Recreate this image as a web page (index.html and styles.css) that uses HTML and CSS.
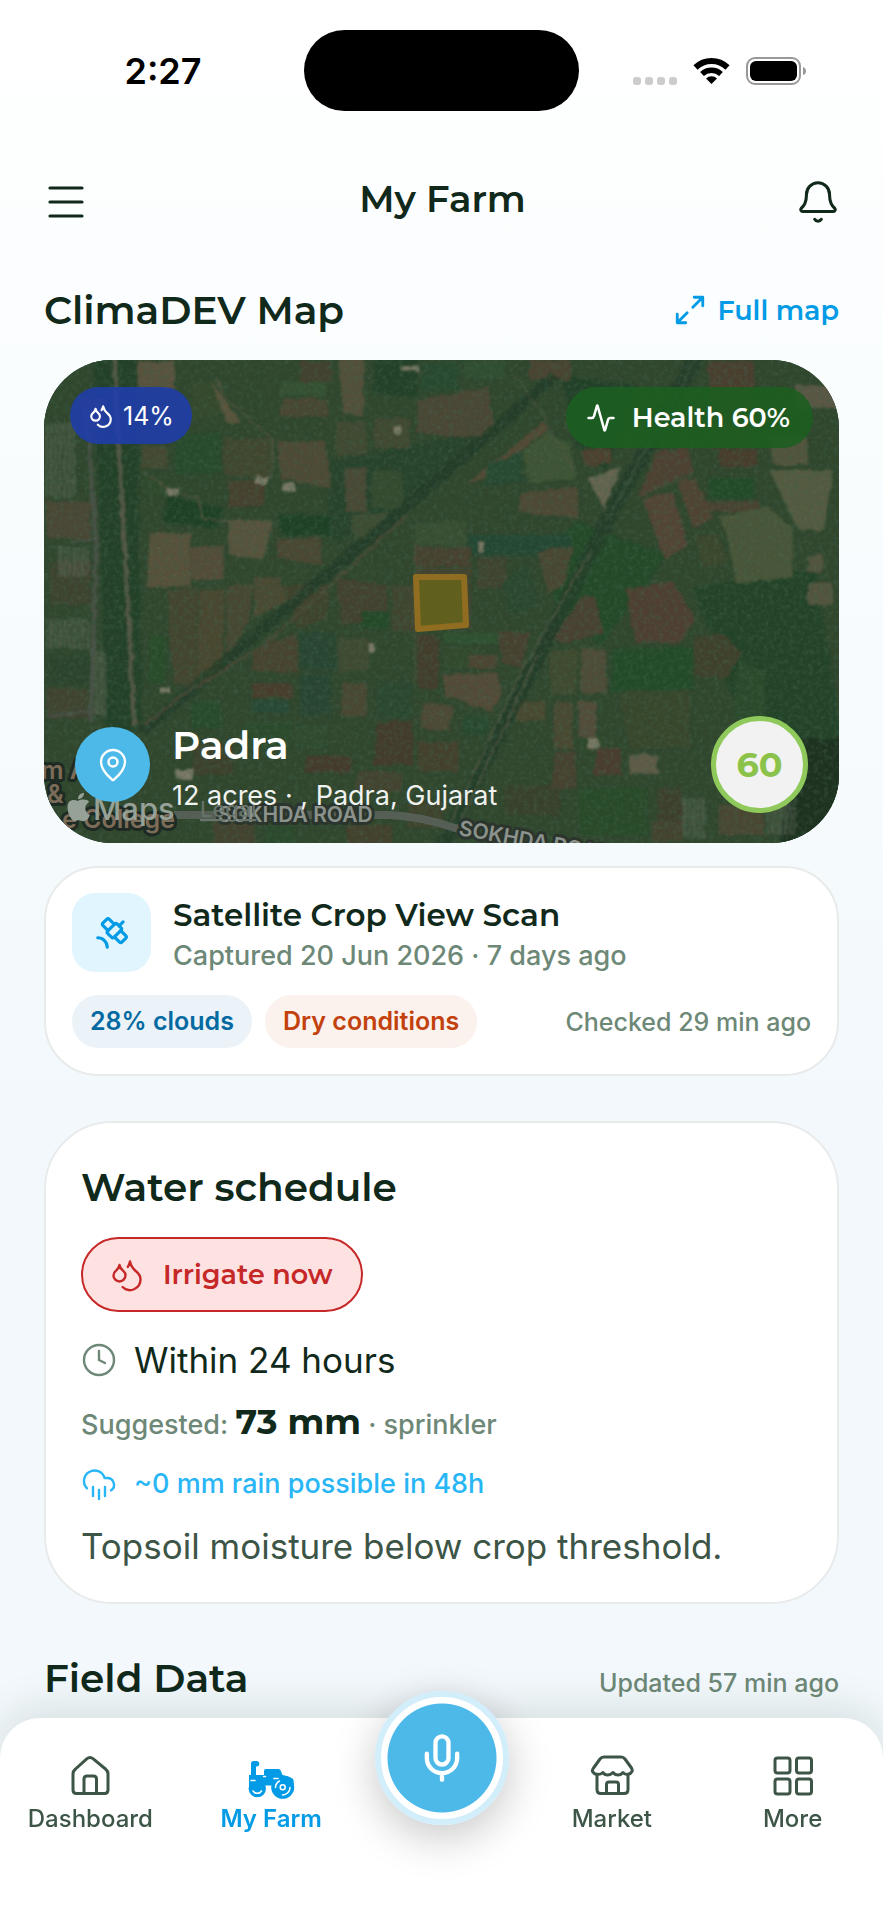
FILE: index.html
```html
<!DOCTYPE html>
<html lang="en">
<head>
<meta charset="utf-8">
<meta name="viewport" content="width=device-width, initial-scale=1">
<title>My Farm</title>
<link rel="stylesheet" href="styles.css">
</head>
<body>
<div class="statusbar">
  <span class="time">2:27</span>
  <span class="island"></span>
  <div class="system">
    <span class="dots"><i></i><i></i><i></i><i></i></span>
    <svg class="wifi" viewBox="0 0 37 27" aria-hidden="true"><path d="M2.500 10.500a23 23 0 0 1 32 0" fill="none" stroke="#000" stroke-width="6"/><path d="M9 17a14 14 0 0 1 19 0" fill="none" stroke="#000" stroke-width="5.500"/><path d="M18.500 27l-5.500-5.500a8 8 0 0 1 11 0z"/></svg>
    <svg class="battery" viewBox="0 0 60 28" aria-hidden="true"><rect x="1" y="1" width="53" height="26" rx="8" fill="#fff" stroke="#999" stroke-width="2"/><rect x="4" y="4" width="47" height="20" rx="6"/><path d="M57 10q3 1 3 4t-3 4z" fill="#999"/></svg>
  </div>
</div>

<header class="topbar">
  <button class="icon-btn" aria-label="Menu"><svg class="icon i48" viewBox="0 0 24 24"><path d="M4 5h16M4 12h16M4 19h16"/></svg></button>
  <h1>My Farm</h1>
  <button class="icon-btn" aria-label="Notifications"><svg class="icon i46" viewBox="0 0 24 24"><path d="M10.268 21a2 2 0 0 0 3.464 0"/><path d="M3.262 15.326A1 1 0 0 0 4 17h16a1 1 0 0 0 .74-1.673C19.41 13.956 18 12.499 18 8A6 6 0 0 0 6 8c0 4.499-1.411 5.956-2.738 7.326"/></svg></button>
</header>

<main>
  <div class="section-head">
    <h2>ClimaDEV Map</h2>
    <a class="full-map" href="#map"><svg class="icon i34 bold" viewBox="0 0 24 24"><path d="M15 3h6v6M21 3l-7 7M9 21H3v-6M3 21l7-7"/></svg>Full map</a>
  </div>

  <section class="map" id="map">
    <svg class="terrain" viewBox="0 0 795 483" preserveAspectRatio="xMidYMid slice" aria-hidden="true">
      <defs>
        <filter id="rough" x="0" y="0" width="100%" height="100%">
          <feTurbulence type="fractalNoise" baseFrequency=".12" numOctaves="3" seed="4" result="n"/>
          <feDisplacementMap in="SourceGraphic" in2="n" scale="6" xChannelSelector="R" yChannelSelector="G"/>
          <feGaussianBlur stdDeviation=".9"/>
        </filter>
        <filter id="grain" x="0" y="0" width="100%" height="100%">
          <feTurbulence type="fractalNoise" baseFrequency=".2" numOctaves="4" seed="9"/>
          <feColorMatrix values="0 0 0 0 .05  0 0 0 0 .12  0 0 0 0 .07  2.600 0 0 0 -1.150"/>
        </filter>
        <filter id="speck" x="0" y="0" width="100%" height="100%">
          <feTurbulence type="fractalNoise" baseFrequency=".3" numOctaves="2" seed="21"/>
          <feColorMatrix values="0 0 0 0 .45  0 0 0 0 .48  0 0 0 0 .36  0 2.400 0 0 -1.300"/>
        </filter>
        <pattern id="houses" width="9" height="8" patternUnits="userSpaceOnUse"><rect x="1" y="1" width="5" height="4" fill="#7b8173"/><rect x="6" y="5" width="2" height="2" fill="#5c6759"/></pattern>
      </defs>
      <rect width="795" height="483" fill="#2b462c"/>
      <g filter="url(#rough)">
      <g transform="translate(-4 -5) scale(.5102 .3333)">
        <g fill="#1f4027">
          <path d="M105 0h40l45 1130h-60z"/><path d="M150 0h40l10 1100h-25z"/>
          <path d="M1050 500l180 100-60 120-70 150-80-60-30-200z" fill="#1d4926"/>
          <path d="M1280 700l240-60 50 500-100 50-110-160z" fill="#1f4226"/>
          <path d="M1480 1150h90v320h-120z" fill="#142e1d"/>
          <path d="M1020 60l150 30-60 260-60-80z"/><path d="M560 320l300-90-150 240-140 100z" fill="#24432b"/>
          <path d="M250 420l110 40-10 60-110-20z" fill="#193f24"/><path d="M470 480h100v60h-100z" fill="#193f24"/>
          <path d="M840 540h200v60H840z" fill="#1f4630"/><path d="M660 0h80v130l-90-20z"/>
        </g>
        <g fill="#43432e">
          <path d="M735 640h110v180H735z"/><path d="M475 690h90v100l-60 30z" fill="#3d422c"/><path d="M690 690h45v140h-45z" fill="#3d452e"/>
          <path d="M300 1170h80v90h-80z" fill="#3b3f2b"/><path d="M400 1100h90v80h-90z" fill="#264c2c"/><path d="M500 1110h60v70h-60z" fill="#2a4c2e"/>
          <path d="M620 1250h90v60h-90z"/><path d="M340 1400h80v70h-80z"/><path d="M440 1410h60v60h-60z" fill="#264829"/><path d="M600 1410h90v60h-90z" fill="#43402c"/>
          <path d="M830 1080h50v60h-50z" fill="#24492f"/><path d="M930 1040h60v60h-60z" fill="#4a482f"/><path d="M720 1340h70v80h-70z" fill="#3c422b"/>
          <path d="M1210 1300h50v140h-50z" fill="#3a3d2a"/><path d="M1200 1400h60v60h-60z"/><path d="M1060 1140h50v50h-50z" fill="#2b482b"/>
          <path d="M1310 370h90v60h-90z" fill="#1f4c28"/><path d="M1300 440h110v30h-110z" fill="#4b4230"/><path d="M510 20h60v60h-60z" fill="#43412d"/><path d="M960 15h80v60h-80z" fill="#4b4431"/>
          <path d="M20 620h80v130H20z" fill="#3b432e"/><path d="M20 900h80v90H20z" fill="#26432b"/><path d="M200 360h50v60h-50z" fill="#2b4a2c"/>
          <path d="M190 20h75v80h-70z" fill="#5b5540"/><path d="M300 85l45-10 10 100-60 20z" fill="#304a2a"/><path d="M335 75l60 130-30-5z" fill="#5d563e"/>
          <path d="M585 0h50v180h-40z" fill="#54513a"/><path d="M475 130h90v55h-95z" fill="#4a4632"/><path d="M475 80h85v40h-90z" fill="#335233"/>
          <path d="M750 25h70v80h-75z" fill="#214a2f"/><path d="M740 135l140-40 10 140-60 15-90-20z" fill="#4b4734"/><path d="M830 20h80v50h-80z" fill="#2c5032"/>
          <path d="M465 260h95l10 140-100-30z" fill="#4f4b34"/><path d="M265 235h90v120h-90z" fill="#234b2a"/><path d="M360 250h90v120l-90-10z" fill="#41472f"/><path d="M370 375h70v80h-70z" fill="#463f2e"/>
          <path d="M80 130h45v90H90z" fill="#4f4a37"/><path d="M200 270h50v70h-50z" fill="#444a30"/><path d="M595 340h45v130h-40z" fill="#4a4934"/><path d="M650 350h60v110h-60z" fill="#304b2f"/><path d="M580 200h60v100h-60zM655 190h70v90h-70z" fill="#404831"/>
          <path d="M370 495h85l-10 80-10 40-65-20z" fill="#5a543d"/><path d="M215 535h80v160h-85z" fill="#5a533b"/><path d="M295 575h65v100h-65z" fill="#554e38"/><path d="M465 555l85-10 5 85-90-20z" fill="#4b4633"/><path d="M610 480l80-10-60 90-20-30z" fill="#3b4d33"/>
          <path d="M735 500h100v70H735z" fill="#344f33"/><path d="M735 575h110v60H735z" fill="#473f2f"/><path d="M580 670l100 20v90l-90 30z" fill="#43412e"/><path d="M630 770h55v50h-55z" fill="#1f4828"/>
          <path d="M250 705h60l-5 290-40-10-10-120z" fill="#43442e"/><path d="M312 705h50l-5 240-50 60z" fill="#4a472f"/><path d="M366 690h52l-10 110-44 120z" fill="#464630"/><path d="M420 668h50l15 70-65 50z" fill="#4c4a31"/>
          <path d="M835 390l150-190 15 20-130 150z" fill="#574835"/><path d="M945 290l50-60 45 40 10 100-90 15z" fill="#3c5635"/><path d="M945 415l110-20v95l-120-20z" fill="#504834"/><path d="M880 330l60-40 10 90-80 10z" fill="#224830"/>
          <path d="M1060 285h60v40l-50 10z" fill="#4f3f2f"/><path d="M1075 370l65-35-35 130z" fill="#6b6a55"/><path d="M1210 290l60-10 10 70-110 80z" fill="#4f4030"/><path d="M1180 430l60-20 30 160-45 45z" fill="#544535"/><path d="M1250 380l35-10 35 120-40 30z" fill="#514333"/>
          <path d="M1310 20h90v260h-85z" fill="#4b3c2d"/><path d="M1425 240h80v90h-70z" fill="#55563d"/><path d="M1480 90h85v70h-85z" fill="#5d5a46"/><path d="M1330 285h75v50h-75z" fill="#483a2c"/>
          <path d="M1430 345h125l-20 180h-50z" fill="#575e42"/><path d="M1330 485l95-30 50 60v150l-110 20-20-150z" fill="#4a5838"/><path d="M1285 550l40-20 25 90-50 20z" fill="#39462c"/>
          <path d="M1150 705l90-30 45 120-35 70-85-5z" fill="#4f3e30"/><path d="M1060 725l25 0 20 110-70 30-30-10z" fill="#494030"/><path d="M1000 890l55-10-5 140-50-5z" fill="#3c4b2e"/><path d="M1060 880l50 5v130h-50z" fill="#504e37"/>
          <path d="M1120 880h160v120l-160 10z" fill="#1e4c27"/><path d="M1280 850l60-15 35 60-30 75-60-5z" fill="#3c4129"/><path d="M1135 1010h140v170h-120z" fill="#34462c"/><path d="M1370 920l50 30v140h-60z" fill="#264c2a"/>
          <path d="M790 835h110v30H790z" fill="#2b522d"/><path d="M790 880h60v60h-60z" fill="#2d4a2c"/><path d="M900 830l60 0-15 110-40-20z" fill="#463f2e"/><path d="M840 900h55v40h-55z" fill="#4e4431"/><path d="M740 840h40v160h-40z" fill="#433a2b"/>
          <path d="M790 960l105-10 10 60-20 60-90-50z" fill="#544b37"/><path d="M510 835h70v110h-70zM510 960h60v120h-60z" fill="#204531"/><path d="M420 880l85-45v120l-90-10z" fill="#46422f"/><path d="M215 840h30v140h-30z" fill="#204e26"/><path d="M415 985h80v45h-80z" fill="#493a2b"/><path d="M415 1035h75v35h-75z" fill="#224834"/><path d="M590 985h50v100h-50z" fill="#4a4631"/><path d="M585 850h60v100h-60z" fill="#3c4b31"/><path d="M660 980h70v110h-70z" fill="#26462f"/>
          <path d="M750 1040l60 20-10 70-55-10z" fill="#504935"/><path d="M660 1100h70v130h-75z" fill="#42392a"/><path d="M300 1040h55v80h-55z" fill="#204c29"/><path d="M520 1200h90v50h-90z" fill="#443729"/><path d="M740 1160h80v90h-80z" fill="#42402c"/><path d="M1010 1040h35v140h-40z" fill="#494832"/><path d="M1055 1040h35v110h-35z" fill="#544e3b"/><path d="M1090 1180h50v80h-55z" fill="#4b3a2d"/>
          <path d="M1155 1200h55v55h-55z" fill="#635f4b"/><path d="M1055 1300h135v140h-130z" fill="#214b28"/><path d="M910 1290h110v90H910z" fill="#364129"/><path d="M1010 1190h40v110h-50z" fill="#463f2e"/><path d="M1330 1350h90v90h-90z" fill="#494633"/><path d="M1505 600h30v50h-30zM1505 685h50v65h-50z" fill="#55573f"/>
          <path d="M10 440h90v110H15z" fill="#4b4734"/><path d="M10 1000h85v90H10z" fill="#3c432e"/><path d="M860 610h55v90h-60z" fill="#3e422d"/><path d="M975 590l70-15-20 120-30 20z" fill="#484631"/><path d="M905 680l50-60 25 130-60 30z" fill="#28462f"/>
        </g>
        <g fill="none" stroke="#1d3a25" opacity=".8">
          <path d="M200 1130L700 480 1010 60" stroke-width="26"/><path d="M790 1470L1110 500 1290 0" stroke-width="30"/>
        </g>
        <g fill="none" stroke="#5a5842" stroke-width="3">
          <path d="M205 1110L275 1025 440 870 720 480" stroke-width="6" stroke="#4b4a36"/><path d="M345 70l20 60 90 120v120M200 350l60 60 50 20 10 60 60 10"/>
          <path d="M805 1400L950 930 1080 590M825 1400L975 900" stroke-width="3" stroke="#505a42"/><path d="M1110 500l60-170L1290 0" stroke="#34503a" stroke-width="4"/>
          <path d="M735 560v430M930 60l60 130 60 170M440 690l-150 10M870 1010L730 1100M1280 360l-90 50" opacity=".6"/>
          <path d="M145 0L165 550l20 560" stroke="#565b49" stroke-width="8"/><path d="M90 160l20 400-10 540M10 1085l100-15M60 560l45-10" stroke="#495248" stroke-width="8"/>
        </g>
        <g fill="url(#houses)" opacity=".8"><path d="M10 200h60v230H10zM35 575h60v90H35zM12 790h85v90H12zM105 890h24v190h-24zM1258 1330h45v120h-45zM1425 1330h55v110h-55z"/></g>
        <g fill="#85846f"><path d="M475 385h25v24h-25zM250 398h22v25h-22zM425 365h22v22h-22zM235 998h20v16h-20zM645 865h12v26h-12zM860 560h10v30h-10zM692 215h16v20h-16zM1075 1150h18v30h-18zM265 1245h35v30h-35zM708 35h35v12h-35z"/></g>
      </g>
      </g>
      <rect width="795" height="483" fill="#4a4a38" opacity=".16"/>
      <rect width="795" height="483" filter="url(#grain)" opacity=".4"/>
      <rect width="795" height="483" filter="url(#speck)" opacity=".1"/>
      <path d="M372 217h48l2 48-48 4z" fill="#66641a" fill-opacity=".85" stroke="#906d20" stroke-width="6" stroke-linejoin="round"/>
      <path d="M130 455h215q30 1 66 13l14 2" fill="none" stroke="#555f55" stroke-width="8"/>
      <g class="road">
        <text x="174" y="462">SOKHDA ROAD</text>
        <text x="414" y="475" transform="rotate(10 414 475)">SOKHDA ROAD</text>
      </g>
      <g class="place">
        <text x="-3" y="419">m A</text><text x="3" y="443">&amp;</text><text x="18" y="468">e College</text>
      </g>
      <text class="legal" x="156" y="457">Legal</text>
      <g class="attribution">
        <path d="M34 441c3-2 10-2 11 1-6 4-4 11 1 13-2 5-5 7-8 6-3-1-4-1-7 0-5 0-10-14-6-19 3-3 6-2 9-1zM34 439c0-4 3-6 6-6 0 4-3 6-6 6z"/>
        <text x="49" y="460">Maps</text>
      </g>
    </svg>
    <div class="map-overlay">
      <div class="map-row top">
        <span class="badge moisture"><svg class="icon i26 bold" viewBox="0 0 24 24"><path d="M7 16.3c2.200 0 4-1.830 4-4.050 0-1.160-.57-2.260-1.710-3.190S7.290 6.750 7 5.300c-.29 1.450-1.140 2.840-2.290 3.760S3 11.100 3 12.250c0 2.220 1.800 4.050 4 4.050z"/><path d="M12.560 6.600A10.970 10.970 0 0 0 14 3.020c.5 2.500 2 4.900 4 6.500s3 3.500 3 5.500a6.980 6.980 0 0 1-11.910 4.970"/></svg>14%</span>
        <span class="badge health"><svg class="icon i30 bold" viewBox="0 0 24 24"><path d="M22 12h-2.480a2 2 0 0 0-1.930 1.460l-2.350 8.360a.25.25 0 0 1-.48 0L9.240 2.180a.25.25 0 0 0-.48 0l-2.350 8.360A2 2 0 0 1 4.490 12H2"/></svg>Health 60%</span>
      </div>
      <div class="map-row bottom">
        <span class="pin"><svg class="icon i36" viewBox="0 0 24 24"><path d="M20 10c0 4.993-5.539 10.193-7.399 11.799a1 1 0 0 1-1.202 0C9.539 20.193 4 14.993 4 10a8 8 0 0 1 16 0"/><circle cx="12" cy="10" r="3"/></svg></span>
        <div class="farm"><strong>Padra</strong><span>12 acres · , Padra, Gujarat</span></div>
        <span class="score">60</span>
      </div>
    </div>
  </section>

  <section class="card scan">
    <div class="scan-head">
      <span class="tile"><svg class="icon i38 bold" viewBox="0 0 24 24"><path d="m13.500 6.500-3.148-3.148a1.205 1.205 0 0 0-1.704 0L6.352 5.648a1.205 1.205 0 0 0 0 1.704L9.500 10.500"/><path d="M16.500 7.500 19 5"/><path d="m17.500 10.500 3.148 3.148a1.205 1.205 0 0 1 0 1.704l-2.296 2.296a1.205 1.205 0 0 1-1.704 0L13.500 14.500"/><path d="M9 21a6 6 0 0 0-6-6"/><path d="M9.352 10.648a1.205 1.205 0 0 0 0 1.704l2.296 2.296a1.205 1.205 0 0 0 1.704 0l4.296-4.296a1.205 1.205 0 0 0 0-1.704l-2.296-2.296a1.205 1.205 0 0 0-1.704 0z"/></svg></span>
      <div class="scan-text"><h3>Satellite Crop View Scan</h3><p>Captured 20 Jun 2026 · 7 days ago</p></div>
    </div>
    <div class="scan-foot">
      <span class="chip clouds">28% clouds</span>
      <span class="chip dry">Dry conditions</span>
      <span class="checked">Checked 29 min ago</span>
    </div>
  </section>

  <section class="card water">
    <h2>Water schedule</h2>
    <button class="irrigate"><svg class="icon i36" viewBox="0 0 24 24"><path d="M7 16.3c2.200 0 4-1.830 4-4.050 0-1.160-.57-2.260-1.710-3.190S7.290 6.750 7 5.300c-.29 1.450-1.140 2.840-2.290 3.760S3 11.100 3 12.250c0 2.220 1.800 4.050 4 4.050z"/><path d="M12.560 6.600A10.970 10.970 0 0 0 14 3.020c.5 2.500 2 4.900 4 6.500s3 3.500 3 5.500a6.980 6.980 0 0 1-11.910 4.970"/></svg>Irrigate now</button>
    <p class="line within"><svg class="icon i36" viewBox="0 0 24 24"><circle cx="12" cy="12" r="10"/><path d="M12 6v6l4 2"/></svg>Within 24 hours</p>
    <p class="suggested">Suggested: <b>73 mm</b> · sprinkler</p>
    <p class="line rain"><svg class="icon i36" viewBox="0 0 24 24"><path d="M4 14.899A7 7 0 1 1 15.710 8h1.790a4.500 4.500 0 0 1 2.500 8.242M16 14v6M8 14v6M12 16v6"/></svg>~0 mm rain possible in 48h</p>
    <p class="note">Topsoil moisture below crop threshold.</p>
  </section>

  <div class="section-head field">
    <h2>Field Data</h2>
    <span class="updated">Updated 57 min ago</span>
  </div>
</main>

<nav class="tabs">
  <a href="#dashboard"><svg class="glyph" viewBox="0 0 48 48"><path d="M24 6.500q1.500 0 3 1.200L39.500 18q2.500 2 2.500 5v16q0 3.500-3.500 3.500h-28Q7 42.500 7 39V23q0-3 2.500-5L21 7.700q1.500-1.200 3-1.200zM18 42V28q0-3 3-3h6.500q3 0 3 3v14"/></svg>Dashboard</a>
  <a href="#farm" class="active"><svg class="glyph solid" viewBox="0 0 48 48"><path d="M4 24V12.500Q4 10 6.500 10H9a2.800 2.800 0 1 1 0 5.500V24z"/><path d="M2 24h15v-4q0-2 2-2h12.500q1.600 0 2.200 1.500L35.500 24q6 .5 10 3.500 1.200 1 1.200 3v4H2z"/><circle cx="10.300" cy="37.500" r="8.700"/><circle cx="35.700" cy="36.300" r="11.500"/><g class="cut"><path d="M4 29.500h4M16.500 25.500h2M27 27.500h4M43 36.500a7.500 7.500 0 0 1-7.500 7.500M28.500 36.500a7.500 7.500 0 0 1 4-6.500M14.500 40a5 5 0 0 1-8.500 0"/><circle cx="35.700" cy="36.300" r="2.500"/></g></svg>My Farm</a>
  <div class="fab-slot"><button class="fab" aria-label="Voice assistant"><svg class="icon i52 bold" viewBox="0 0 24 24"><path d="M12 19v3M19 10v2a7 7 0 0 1-14 0v-2"/><rect x="9" y="2" width="6" height="13" rx="3"/></svg></button></div>
  <a href="#market"><svg class="glyph" viewBox="0 0 48 48"><path d="M12 8q1.500-2 4-2h17q2.500 0 4 2l6.500 9q1.500 3 0 4-1.500 2.500-4.500 2.500-2 0-4-2-2 2.500-5 2.500t-5-2.500q-2.500 2.500-5.500 2.500t-4.500-2.500q-2 2-5.500 2-3 0-4.500-2.500-1.500-1 .5-4zM9 23v15.500q0 4 4 4h23q4 0 4-4V23M18.500 42V33.500q0-2.500 2.500-2.500h7q2.500 0 2.500 2.500V42"/></svg>Market</a>
  <a href="#more"><svg class="glyph" viewBox="0 0 48 48"><rect x="6" y="7" width="15" height="15" rx="2.500"/><rect x="27.500" y="7" width="15" height="15" rx="2.500"/><rect x="6" y="28" width="15" height="15" rx="2.500"/><rect x="27.500" y="28" width="15" height="15" rx="2.500"/></svg>More</a>
</nav>
</body>
</html>
```
FILE: styles.css
```css
:root {
  --ink: #10291a;
  --muted: #6d8877;
  --soft: #3d5546;
  --blue: #039be5;
  --sky: #4db9e9;
  --display: Montserrat, Inter, "Liberation Sans", sans-serif;
}
* { box-sizing: border-box; }
body {
  margin: 0;
  min-height: 100vh;
  padding-bottom: 202px;
  background: linear-gradient(#fff, #fafdfe 20%, #f2f8fc 60%, #f2f8fb);
  color: var(--ink);
  font-family: Inter, "Liberation Sans", sans-serif;
  font-size: 27px;
}
h1, h2, h3, p { margin: 0; font-weight: 400; }
h1, h2, h3 { font-family: var(--display); font-weight: 600; }
button { font: inherit; color: inherit; background: none; border: 0; padding: 0; }
a { color: inherit; text-decoration: none; }
svg { display: block; flex: none; }
h2 { font-size: 39px; line-height: 48px; }

.icon { fill: none; stroke: currentColor; stroke-width: 1.6; stroke-linecap: round; stroke-linejoin: round; }
.icon.bold { stroke-width: 2; }
.i26 { width: 26px; height: 26px; }
.i30 { width: 30px; height: 30px; }
.i34 { width: 34px; height: 34px; }
.i36 { width: 36px; height: 36px; }
.i38 { width: 38px; height: 38px; }
.i46 { width: 46px; height: 46px; }
.i48 { width: 48px; height: 48px; }
.i52 { width: 52px; height: 52px; }

.statusbar { display: grid; grid-template-columns: 1fr 275px 1fr; align-items: center; padding-top: 30px; color: #000; }
.time { padding-left: 22px; text-align: center; font-size: 36px; font-weight: 600; }
.island { height: 81px; border-radius: 41px; background: #000; }
.system { display: flex; align-items: center; justify-content: center; gap: 16px; padding-right: 24px; }
.dots { display: flex; gap: 4px; padding-top: 20px; }
.dots i { width: 8px; height: 8px; border-radius: 3px; background: #ccc; }
.wifi { width: 37px; height: 27px; }
.battery { width: 60px; height: 28px; }

.topbar { display: flex; align-items: center; justify-content: space-between; margin-top: 67px; padding: 0 42px; }
.topbar h1 { padding-bottom: 6px; font-size: 37px; line-height: 42px; }

main { padding: 60px 44px 0; }
.section-head { display: flex; align-items: center; justify-content: space-between; margin-bottom: 26px; }
.full-map { display: flex; align-items: center; gap: 10px; color: var(--blue); font-family: var(--display); font-size: 27px; font-weight: 600; }

.map { position: relative; aspect-ratio: 795 / 483; border-radius: 68px; overflow: hidden; background: #27472b; }
.terrain { width: 100%; height: 100%; }
.road { font: 600 21px Inter, sans-serif; fill: #8b938c; stroke: #2b352d; stroke-width: 6px; paint-order: stroke; stroke-linejoin: round; }
.place { font: 600 25px Inter, sans-serif; fill: #7d6c58; stroke: #1e2b24; stroke-width: 6px; paint-order: stroke; stroke-linejoin: round; }
.attribution { font: 500 31px Inter, sans-serif; fill: #96a197; }
.legal { font: 400 22px Inter, sans-serif; fill: #69756b; text-decoration: underline; }
.map-overlay { position: absolute; inset: 0; display: flex; flex-direction: column; justify-content: space-between; padding: 27px 26px 30px; }
.map-row { display: flex; color: #fff; }
.map-row.top { align-items: flex-start; justify-content: space-between; }
.map-row.bottom { align-items: center; padding: 0 5px; }
.badge { display: flex; align-items: center; border-radius: 32px; }
.moisture { gap: 9px; height: 57px; padding: 0 18px; background: rgba(31, 61, 173, .87); font-size: 25px; }
.health { gap: 16px; height: 61px; padding: 0 23px 0 20px; background: rgba(27, 94, 32, .88); font-family: var(--display); font-size: 27px; font-weight: 600; }
.pin { display: grid; place-items: center; width: 75px; height: 75px; border-radius: 50%; background: var(--sky); }
.farm { flex: 1; display: flex; flex-direction: column; gap: 12px; padding: 7px 0 0 22px; }
.farm strong { font: 600 39px/44px var(--display); }
.farm span { color: #f0f2f0; line-height: 34px; }
.score { display: grid; place-items: center; width: 97px; height: 97px; border: 5px solid #8fc95b; border-radius: 50%; background: #f1f2f1; color: #8bc34a; font: 700 35px var(--display); }

.card { border: 2px solid #e8ebea; background: #fff; }
.scan { display: flex; flex-direction: column; gap: 23px; margin-top: 23px; padding: 25px 26px 26px; border-radius: 54px; }
.scan-head { display: flex; align-items: center; gap: 22px; }
.scan-text { display: flex; flex-direction: column; gap: 7px; padding-top: 4px; }
.tile { display: grid; place-items: center; width: 79px; height: 79px; border-radius: 23px; background: #e1f5fe; color: var(--blue); }
.scan h3 { font-size: 31px; line-height: 36px; }
.scan p { color: var(--muted); font-weight: 500; line-height: 32px; }
.scan-foot { display: flex; align-items: center; gap: 13px; font-size: 25px; }
.chip { padding: 0 18px; border-radius: 27px; line-height: 53px; font-weight: 600; }
.clouds { background: #ebf3f8; color: #0369a1; }
.dry { background: #fbf1ed; color: #c2410c; }
.checked { margin-left: auto; color: var(--muted); font-weight: 500; }

.water { display: flex; flex-direction: column; align-items: flex-start; margin-top: 45px; padding: 40px 35px 34px; border-radius: 68px; }
.irrigate { display: flex; align-items: center; gap: 18px; height: 75px; margin: 26px 0; padding: 0 28px 0 26px; border: 2px solid #c62828; border-radius: 38px; background: #fee2e2; color: #c62828; font-family: var(--display); font-size: 27px; font-weight: 600; }
.line { display: flex; align-items: center; gap: 17px; }
.within { font-size: 35px; line-height: 44px; }
.within svg { color: var(--muted); }
.suggested { margin: 18px 0 19px; color: var(--muted); font-weight: 500; line-height: 44px; }
.suggested b { color: var(--ink); font-family: var(--display); font-size: 35px; font-weight: 700; }
.rain { color: #29b6f6; font-weight: 500; line-height: 36px; }
.note { margin-top: 22px; color: var(--soft); font-size: 35px; line-height: 44px; }
.section-head.field { align-items: baseline; margin: 50px 0 0; }
.updated { color: var(--muted); font-size: 25px; font-weight: 500; }

.tabs { position: fixed; left: 0; right: 0; bottom: 0; display: flex; align-items: flex-start; height: 202px; padding-top: 33px; border-radius: 40px 40px 0 0; background: #fff; box-shadow: 0 -8px 44px rgba(16, 41, 26, .12); }
.tabs a { flex: 1; display: flex; flex-direction: column; align-items: center; gap: 6px; color: var(--soft); font-size: 24px; font-weight: 500; line-height: 28px; }
.tabs a.active { color: var(--blue); font-weight: 600; }
.glyph { width: 48px; height: 48px; fill: none; stroke: currentColor; stroke-width: 3; stroke-linecap: round; stroke-linejoin: round; }
.glyph.solid { fill: currentColor; stroke: none; }
.cut { fill: none; stroke: #fff; stroke-width: 1.5; }
.fab-slot { display: flex; justify-content: center; width: 160px; margin-top: -60px; }
.fab { display: grid; place-items: center; width: 134px; height: 134px; border: 6px solid #d2eefa; border-radius: 50%; background: radial-gradient(circle, var(--sky) 54px, #fff 55px); color: #fff; box-shadow: 0 12px 44px rgba(0, 0, 0, .22); }
```
